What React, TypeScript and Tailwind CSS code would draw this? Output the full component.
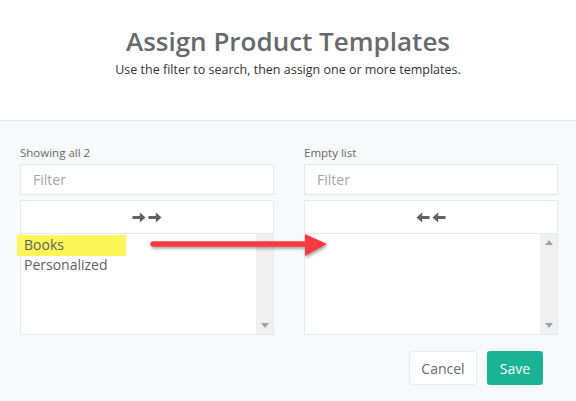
import React from "react";

function ArrowIcon({ dir }: { dir: "left" | "right" }) {
  return (
    <svg width="14" height="11" viewBox="0 0 14 11" className={dir === "left" ? "-scale-x-100" : ""}>
      <path d="M0.5 4.1h7.3V0.6L13.5 5.5 7.8 10.4V6.9H0.5z" fill="#5f6366" />
    </svg>
  );
}

function ListBox({
  label,
  dir,
  items,
}: {
  label: string;
  dir: "left" | "right";
  items: string[];
}) {
  return (
    <div className="flex flex-col">
      <div className="h-[20px] text-[11.5px] leading-[20px] text-[#676a6c]">{label}</div>
      <div className="mt-[1px] flex h-[31px] items-center border border-[#e5e6e7] bg-white px-[12px] text-[14px] text-[#a4a6a8]">
        Filter
      </div>
      <div className="mt-[5px] flex h-[135px] flex-col border border-[#e7eaec] bg-white">
        <div className="flex h-[33px] items-center justify-center gap-[2px] border-b border-[#e7eaec]">
          <ArrowIcon dir={dir} />
          <ArrowIcon dir={dir} />
        </div>
        <div className="flex flex-1">
          <div className="flex-1 pt-[1px] text-[14px] leading-[20px] text-[#5e6163]">
            {items.map((it, i) => (
              <div key={it} className={i === 0 ? "relative" : ""}>
                {i === 0 && <div className="absolute left-[-4px] top-0 h-[21px] w-[109px] bg-[#fdf65a]" />}
                <span className="relative pl-[3px]">{it}</span>
              </div>
            ))}
          </div>
          <div className="flex w-[17px] flex-col items-center justify-between bg-[#f0f0f0] py-[6px]">
            <svg width="8" height="5" viewBox="0 0 8 5">
              <path d="M0 5L4 0 8 5z" fill={items.length ? "#e0e0e0" : "#a3a3a3"} />
            </svg>
            <svg width="8" height="5" viewBox="0 0 8 5">
              <path d="M0 0L8 0 4 5z" fill="#a3a3a3" />
            </svg>
          </div>
        </div>
      </div>
    </div>
  );
}

export default function App() {
  return (
    <div
      className="relative flex h-[401px] w-[576px] flex-col bg-[#f8f9fb]"
      style={{ fontFamily: '"Open Sans", "Noto Sans", sans-serif' }}
    >
      {/* header */}
      <div className="flex h-[121px] flex-col items-center border-b border-[#e5e6e7] bg-white pt-[23px]">
        <h1 className="text-[26px] font-semibold leading-[36px] text-[#676a6c]">Assign Product Templates</h1>
        <p className="mt-[2px] text-[12.5px] leading-[18px] text-[#333]">
          Use the filter to search, then assign one or more templates.
        </p>
      </div>

      {/* dual listbox */}
      <div className="grid grid-cols-2 gap-[30px] pl-[20px] pr-[18px] pt-[22px]">
        <ListBox label="Showing all 2" dir="right" items={["Books", "Personalized"]} />
        <ListBox label="Empty list" dir="left" items={[]} />
      </div>

      {/* footer */}
      <div className="flex justify-end gap-[10px] pr-[33px] pt-[16px]">
        <button className="h-[34px] w-[68px] rounded-[3px] border border-[#e7eaec] bg-white text-[14px] text-[#676a6c]">
          Cancel
        </button>
        <button className="h-[34px] w-[56px] rounded-[3px] bg-[#1ab394] text-[14px] text-white">Save</button>
      </div>

      {/* annotation arrow */}
      <svg className="absolute left-[145px] top-[231px]" width="190" height="34" viewBox="0 0 190 34">
        <defs>
          <filter id="sh" x="-10%" y="-50%" width="120%" height="200%">
            <feDropShadow dx="1" dy="2" stdDeviation="1.5" floodColor="#000" floodOpacity="0.35" />
          </filter>
        </defs>
        <g filter="url(#sh)">
          <path d="M8 13h154" stroke="#f9383f" strokeWidth="5.5" strokeLinecap="round" />
          <path d="M160 3L182 13 160 25z" fill="#f9383f" />
        </g>
      </svg>
    </div>
  );
}
